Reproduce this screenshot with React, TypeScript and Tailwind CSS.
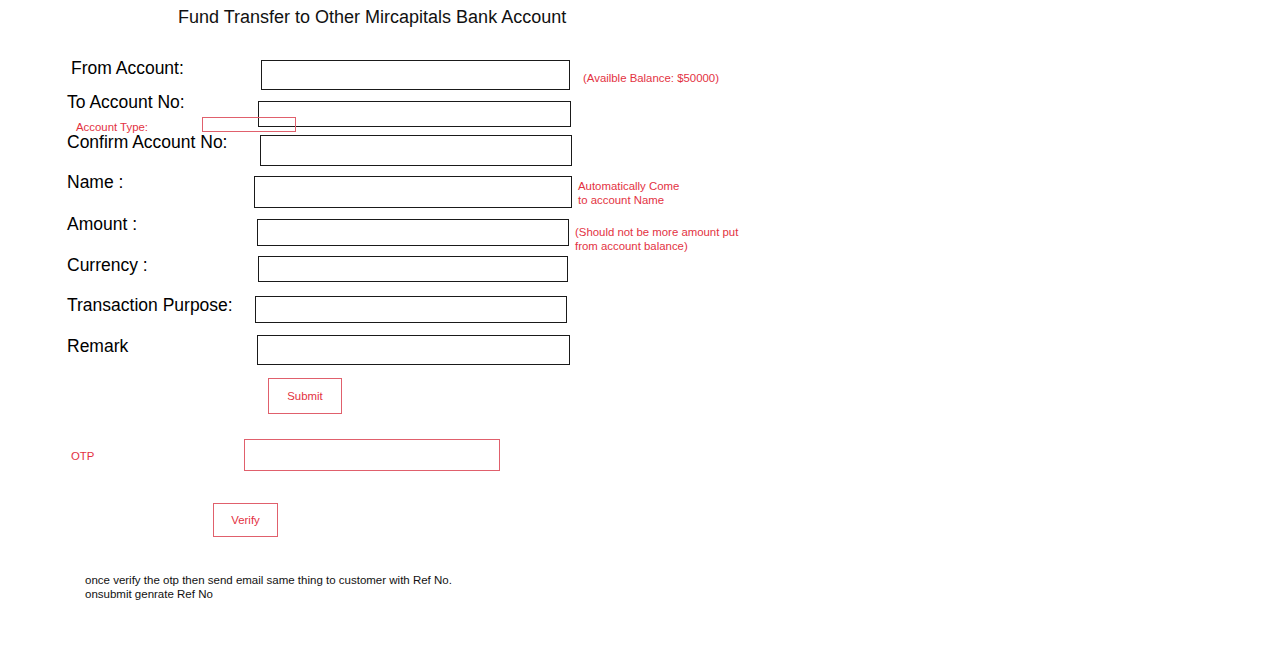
import React from "react";

const font = { fontFamily: '"Liberation Sans", Arial, sans-serif' };

export default function App() {
  return (
    <div className="w-[1280px] h-[651px] bg-white text-black overflow-hidden" style={font}>
      {/* Title */}
      <div className="pt-[7px] pl-[178px] text-[18px] leading-[20px] text-[#111]">
        Fund Transfer to Other Mircapitals Bank Account
      </div>

      {/* From Account */}
      <div className="flex items-start mt-[30px] h-[33px]">
        <div className="ml-[71px] w-[190px] shrink-0 mt-[1px] text-[17.5px] leading-[20px]">From Account:</div>
        <div className="mt-[3px] w-[309px] h-[30px] border border-[#1a1a1a] shrink-0" />
        <div className="ml-[13px] mt-[14px] text-[11.4px] leading-[14px] text-[#e3323f]">(Availble Balance: $50000)</div>
      </div>

      {/* To Account No */}
      <div className="relative flex items-start h-[37px]">
        <div className="ml-[67px] w-[191px] shrink-0 mt-[2px] text-[17.5px] leading-[20px]">To Account No:</div>
        <div className="mt-[11px] w-[313px] h-[26px] border border-[#1a1a1a] shrink-0" />
        <div className="absolute left-[76px] top-[30px] text-[11.4px] leading-[14px] text-[#e3323f]">Account Type:</div>
        <div className="absolute left-[202px] top-[27px] w-[94px] h-[15px] border border-[#e0606c]" />
      </div>

      {/* Confirm Account No */}
      <div className="flex items-start h-[39px]">
        <div className="ml-[67px] w-[193px] shrink-0 mt-[5px] text-[17.5px] leading-[20px]">Confirm Account No:</div>
        <div className="mt-[8px] w-[312px] h-[31px] border border-[#1a1a1a] shrink-0" />
      </div>

      {/* Name */}
      <div className="flex items-start h-[42px]">
        <div className="ml-[67px] w-[187px] shrink-0 mt-[6px] text-[17.5px] leading-[20px]">Name :</div>
        <div className="mt-[10px] w-[318px] h-[32px] border border-[#1a1a1a] shrink-0" />
        <div className="ml-[6px] mt-[13px] text-[11.4px] leading-[14px] text-[#e3323f]">
          Automatically Come
          <br />
          to account Name
        </div>
      </div>

      {/* Amount */}
      <div className="flex items-start h-[38px]">
        <div className="ml-[67px] w-[190px] shrink-0 mt-[6px] text-[17.5px] leading-[20px]">Amount :</div>
        <div className="mt-[11px] w-[312px] h-[27px] border border-[#1a1a1a] shrink-0" />
        <div className="ml-[6px] mt-[17px] text-[11.4px] leading-[14px] text-[#e3323f]">
          (Should not be more amount put
          <br />
          from account balance)
        </div>
      </div>

      {/* Currency */}
      <div className="flex items-start h-[36px]">
        <div className="ml-[67px] w-[191px] shrink-0 mt-[9px] text-[17.5px] leading-[20px]">Currency :</div>
        <div className="mt-[10px] w-[310px] h-[26px] border border-[#1a1a1a] shrink-0" />
      </div>

      {/* Transaction Purpose */}
      <div className="flex items-start h-[41px]">
        <div className="ml-[67px] w-[188px] shrink-0 mt-[13px] text-[17.5px] leading-[20px]">Transaction Purpose:</div>
        <div className="mt-[14px] w-[312px] h-[27px] border border-[#1a1a1a] shrink-0" />
      </div>

      {/* Remark */}
      <div className="flex items-start h-[42px]">
        <div className="ml-[67px] w-[190px] shrink-0 mt-[13px] text-[17.5px] leading-[20px]">Remark</div>
        <div className="mt-[12px] w-[313px] h-[30px] border border-[#1a1a1a] shrink-0" />
      </div>

      {/* Submit */}
      <div className="mt-[13px] ml-[268px] w-[74px] h-[36px] border border-[#e0606c] flex items-center justify-center text-[11.4px] leading-[14px] text-[#e3323f]">
        Submit
      </div>

      {/* OTP */}
      <div className="flex items-start h-[57px]">
        <div className="ml-[71px] w-[173px] shrink-0 mt-[35px] text-[11.4px] leading-[14px] text-[#e3323f]">OTP</div>
        <div className="mt-[25px] w-[256px] h-[32px] border border-[#e0606c] shrink-0" />
      </div>

      {/* Verify */}
      <div className="mt-[32px] ml-[213px] w-[65px] h-[34px] border border-[#e0606c] flex items-center justify-center text-[11.4px] leading-[14px] text-[#e3323f]">
        Verify
      </div>

      {/* Footer notes */}
      <div className="mt-[36px] ml-[85px] text-[11.5px] leading-[14px] text-[#111]">
        once verify the otp then send email same thing to customer with Ref No.
        <br />
        onsubmit genrate Ref No
      </div>
    </div>
  );
}
